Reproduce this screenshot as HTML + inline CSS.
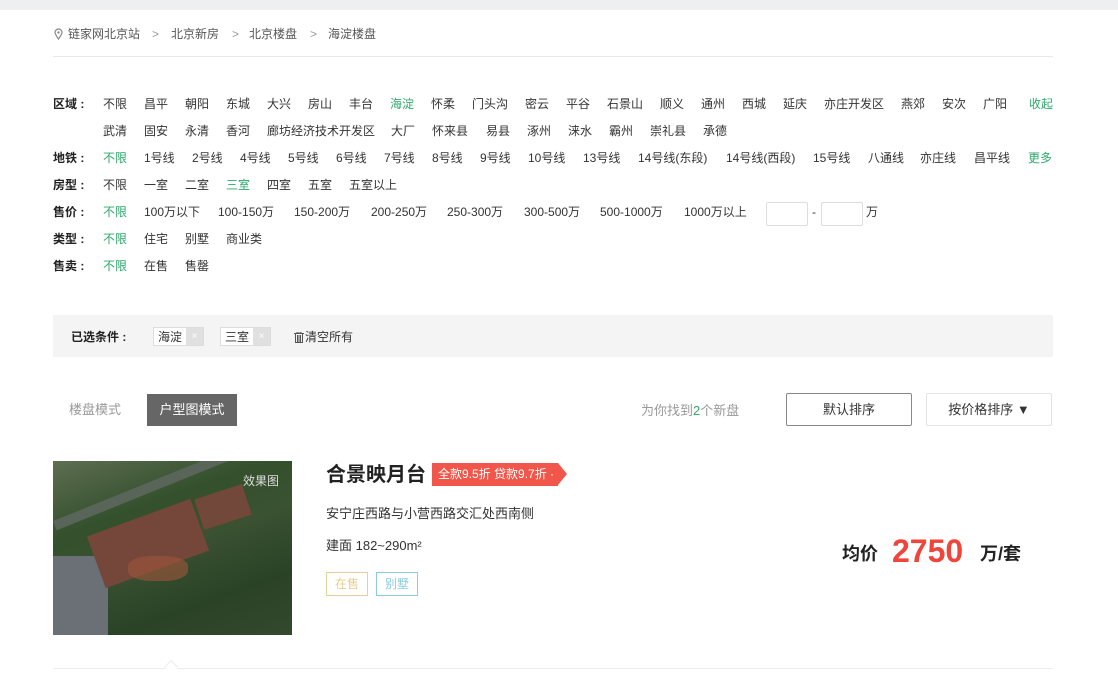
<!DOCTYPE html>
<html><head><meta charset="utf-8"><style>
*{margin:0;padding:0;box-sizing:border-box}
body{width:1118px;height:696px;background:#fff;position:relative;overflow:hidden;font-family:"Liberation Sans","Noto Sans CJK SC",sans-serif;font-size:12px;color:#333}
.a{position:absolute;white-space:nowrap;line-height:14px}
.g{color:#2fa86b}
.b{font-weight:bold;color:#222}
.gr{color:#555}
</style></head><body>
<div style="position:absolute;left:0;top:0;width:1118px;height:10px;background:#eeeff1"></div>
<svg style="position:absolute;left:54px;top:28px" width="9" height="12" viewBox="0 0 9 12"><path d="M4.5 11C2 7.5 1 6 1 4.5a3.5 3.5 0 0 1 7 0C8 6 7 7.5 4.5 11z" fill="none" stroke="#888" stroke-width="1.2"/><circle cx="4.5" cy="4.5" r="1.2" fill="#888"/></svg>
<div class="a gr" style="left:68px;top:27px">链家网北京站</div>
<div class="a" style="left:152px;top:27px;color:#999">&gt;</div>
<div class="a gr" style="left:171px;top:27px">北京新房</div>
<div class="a" style="left:232px;top:27px;color:#999">&gt;</div>
<div class="a gr" style="left:249px;top:27px">北京楼盘</div>
<div class="a" style="left:310px;top:27px;color:#999">&gt;</div>
<div class="a gr" style="left:328px;top:27px">海淀楼盘</div>
<div style="position:absolute;left:53px;top:56px;width:1000px;height:1px;background:#e8e8e8"></div>

<div class="a b" style="left:53px;top:97px">区域 :</div>
<div class="a" style="left:103px;top:97px">不限</div><div class="a" style="left:144px;top:97px">昌平</div><div class="a" style="left:185px;top:97px">朝阳</div><div class="a" style="left:226px;top:97px">东城</div><div class="a" style="left:267px;top:97px">大兴</div><div class="a" style="left:308px;top:97px">房山</div><div class="a" style="left:349px;top:97px">丰台</div><div class="a g" style="left:390px;top:97px">海淀</div><div class="a" style="left:431px;top:97px">怀柔</div><div class="a" style="left:472px;top:97px">门头沟</div><div class="a" style="left:525px;top:97px">密云</div><div class="a" style="left:566px;top:97px">平谷</div><div class="a" style="left:607px;top:97px">石景山</div><div class="a" style="left:660px;top:97px">顺义</div><div class="a" style="left:701px;top:97px">通州</div><div class="a" style="left:742px;top:97px">西城</div><div class="a" style="left:783px;top:97px">延庆</div><div class="a" style="left:824px;top:97px">亦庄开发区</div><div class="a" style="left:901px;top:97px">燕郊</div><div class="a" style="left:942px;top:97px">安次</div><div class="a" style="left:983px;top:97px">广阳</div><div class="a g" style="left:1029px;top:97px">收起</div>

<div class="a" style="left:103px;top:124px">武清</div><div class="a" style="left:144px;top:124px">固安</div><div class="a" style="left:185px;top:124px">永清</div><div class="a" style="left:226px;top:124px">香河</div><div class="a" style="left:267px;top:124px">廊坊经济技术开发区</div><div class="a" style="left:391px;top:124px">大厂</div><div class="a" style="left:432px;top:124px">怀来县</div><div class="a" style="left:486px;top:124px">易县</div><div class="a" style="left:527px;top:124px">涿州</div><div class="a" style="left:568px;top:124px">涞水</div><div class="a" style="left:609px;top:124px">霸州</div><div class="a" style="left:650px;top:124px">崇礼县</div><div class="a" style="left:703px;top:124px">承德</div>

<div class="a b" style="left:53px;top:151px">地铁 :</div>
<div class="a g" style="left:103px;top:151px">不限</div><div class="a" style="left:144px;top:151px">1号线</div><div class="a" style="left:192px;top:151px">2号线</div><div class="a" style="left:240px;top:151px">4号线</div><div class="a" style="left:288px;top:151px">5号线</div><div class="a" style="left:336px;top:151px">6号线</div><div class="a" style="left:384px;top:151px">7号线</div><div class="a" style="left:432px;top:151px">8号线</div><div class="a" style="left:480px;top:151px">9号线</div><div class="a" style="left:528px;top:151px">10号线</div><div class="a" style="left:583px;top:151px">13号线</div><div class="a" style="left:638px;top:151px">14号线(东段)</div><div class="a" style="left:726px;top:151px">14号线(西段)</div><div class="a" style="left:813px;top:151px">15号线</div><div class="a" style="left:868px;top:151px">八通线</div><div class="a" style="left:920px;top:151px">亦庄线</div><div class="a" style="left:974px;top:151px">昌平线</div><div class="a g" style="left:1028px;top:151px">更多</div>

<div class="a b" style="left:53px;top:178px">房型 :</div>
<div class="a" style="left:103px;top:178px">不限</div><div class="a" style="left:144px;top:178px">一室</div><div class="a" style="left:185px;top:178px">二室</div><div class="a g" style="left:226px;top:178px">三室</div><div class="a" style="left:267px;top:178px">四室</div><div class="a" style="left:308px;top:178px">五室</div><div class="a" style="left:349px;top:178px">五室以上</div>

<div class="a b" style="left:53px;top:205px">售价 :</div>
<div class="a g" style="left:103px;top:205px">不限</div><div class="a" style="left:144px;top:205px">100万以下</div><div class="a" style="left:218px;top:205px">100-150万</div><div class="a" style="left:294px;top:205px">150-200万</div><div class="a" style="left:371px;top:205px">200-250万</div><div class="a" style="left:447px;top:205px">250-300万</div><div class="a" style="left:524px;top:205px">300-500万</div><div class="a" style="left:600px;top:205px">500-1000万</div><div class="a" style="left:684px;top:205px">1000万以上</div>
<div style="position:absolute;left:766px;top:202px;width:42px;height:24px;border:1px solid #ddd;border-radius:2px"></div>
<div class="a" style="left:812px;top:205px">-</div>
<div style="position:absolute;left:821px;top:202px;width:42px;height:24px;border:1px solid #ddd;border-radius:2px"></div>
<div class="a" style="left:866px;top:205px">万</div>

<div class="a b" style="left:53px;top:232px">类型 :</div>
<div class="a g" style="left:103px;top:232px">不限</div><div class="a" style="left:144px;top:232px">住宅</div><div class="a" style="left:185px;top:232px">别墅</div><div class="a" style="left:226px;top:232px">商业类</div>

<div class="a b" style="left:53px;top:259px">售卖 :</div>
<div class="a g" style="left:103px;top:259px">不限</div><div class="a" style="left:144px;top:259px">在售</div><div class="a" style="left:185px;top:259px">售罄</div>

<div style="position:absolute;left:53px;top:315px;width:1000px;height:42px;background:#f4f4f4"></div>
<div class="a b" style="left:71px;top:330px">已选条件 :</div>
<div style="position:absolute;left:153px;top:327px;width:51px;height:19px;border:1px solid #ddd;background:#fff"><span class="a" style="left:4px;top:2px">海淀</span><span style="position:absolute;right:0;top:0;width:17px;height:17px;background:#e0e0e0;color:#fff;font-size:10px;text-align:center;line-height:17px">×</span></div>
<div style="position:absolute;left:220px;top:327px;width:51px;height:19px;border:1px solid #ddd;background:#fff"><span class="a" style="left:4px;top:2px">三室</span><span style="position:absolute;right:0;top:0;width:17px;height:17px;background:#e0e0e0;color:#fff;font-size:10px;text-align:center;line-height:17px">×</span></div>
<svg style="position:absolute;left:294px;top:332px" width="10" height="11" viewBox="0 0 10 11"><path d="M0 1.5h10M3 1.5V0h4v1.5M1.5 1.5V10.5h7V1.5M3.5 3v7M5 3v7M6.5 3v7" fill="none" stroke="#555" stroke-width="1"/></svg>
<div class="a" style="left:305px;top:330px">清空所有</div>

<div class="a" style="left:69px;top:403px;font-size:13px;color:#999">楼盘模式</div>
<div style="position:absolute;left:147px;top:394px;width:90px;height:32px;background:#666;color:#fff;font-size:13px;line-height:32px;text-align:center">户型图模式</div>
<div class="a" style="left:641px;top:404px;font-size:13px;color:#999">为你找到<span class="g">2</span>个新盘</div>
<div style="position:absolute;left:786px;top:393px;width:126px;height:33px;border:1px solid #888;border-radius:2px;font-size:13px;line-height:31px;text-align:center">默认排序</div>
<div style="position:absolute;left:926px;top:393px;width:126px;height:33px;border:1px solid #e3e3e3;border-radius:2px;font-size:13px;line-height:31px;text-align:center">按价格排序 ▼</div>

<div style="position:absolute;left:53px;top:461px;width:239px;height:174px;overflow:hidden;background:linear-gradient(160deg,#5e6e52 0%,#34502c 30%,#3a5232 50%,#2a4226 75%,#34492e 100%)">
<div style="position:absolute;left:0;top:95px;width:55px;height:90px;background:#6a7076"></div>
<div style="position:absolute;left:0;top:60px;width:260px;height:10px;background:#5a655a;transform:rotate(-22deg);transform-origin:0 0"></div>
<div style="position:absolute;left:40px;top:55px;width:110px;height:55px;background:#74473a;transform:rotate(-20deg)"></div>
<div style="position:absolute;left:145px;top:30px;width:50px;height:32px;background:#72483a;transform:rotate(-18deg)"></div>
<div style="position:absolute;left:75px;top:95px;width:60px;height:25px;background:#a0553a;border-radius:40%;opacity:.6"></div>
<div class="a" style="left:190px;top:13px;color:#ddd;font-size:12px">效果图</div>
</div>

<div class="a" style="left:326px;top:463px;font-size:20px;line-height:24px;font-weight:bold;color:#222">合景映月台</div>
<div style="position:absolute;left:432px;top:463px;width:126px;height:23px;background:#f0564a;color:#fff;font-size:12px;line-height:23px;padding-left:6px">全款9.5折 贷款9.7折 ·</div>
<div style="position:absolute;left:558px;top:463px;width:0;height:0;border-top:11.5px solid transparent;border-bottom:11.5px solid transparent;border-left:9px solid #f0564a"></div>
<div class="a" style="left:326px;top:507px;font-size:13px">安宁庄西路与小营西路交汇处西南侧</div>
<div class="a" style="left:326px;top:539px;font-size:13px">建面 182~290m²</div>
<div style="position:absolute;left:326px;top:572px;width:42px;height:24px;border:1px solid #e5d39a;color:#e5cf8f;text-align:center;line-height:22px">在售</div>
<div style="position:absolute;left:376px;top:572px;width:42px;height:24px;border:1px solid #8ccbe0;color:#8ccbe0;text-align:center;line-height:22px">别墅</div>

<div class="a" style="left:842px;top:543px;font-size:18px;line-height:22px;font-weight:bold;color:#222">均价</div>
<div class="a" style="left:892px;top:533px;font-size:32px;line-height:36px;font-weight:bold;color:#f0453a">2750</div>
<div class="a" style="left:980px;top:543px;font-size:18px;line-height:22px;font-weight:bold;color:#222">万/套</div>

<div style="position:absolute;left:53px;top:668px;width:1000px;height:1px;background:#ececec"></div>
<div style="position:absolute;left:166px;top:662px;width:10px;height:10px;background:#fff;border-left:1px solid #ececec;border-top:1px solid #ececec;transform:rotate(45deg)"></div>
</body></html>
